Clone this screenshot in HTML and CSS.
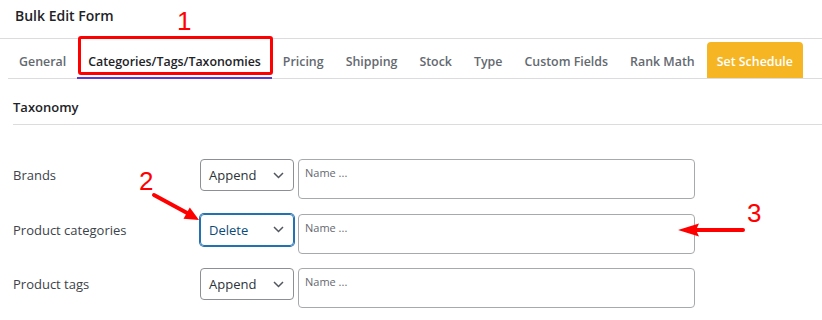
FILE: index.html
```html
<!DOCTYPE html>
<html lang="en">
<head>
  <meta charset="UTF-8">
  <meta name="viewport" content="width=device-width, initial-scale=1.0">
  <title>Bulk Edit Form</title>
  <link rel="stylesheet" href="styles.css">
</head>
<body>
  <div class="page">
    <div class="form-title">Bulk Edit Form</div>

    <div class="tabs">
      <div class="tab">General</div>
      <div class="tab active">Categories/Tags/Taxonomies</div>
      <div class="tab">Pricing</div>
      <div class="tab">Shipping</div>
      <div class="tab">Stock</div>
      <div class="tab">Type</div>
      <div class="tab">Custom Fields</div>
      <div class="tab">Rank Math</div>
      <div class="tab schedule">Set Schedule</div>
    </div>

    <div class="section">
      <h3 class="section-title">Taxonomy</h3>

      <div class="rows">
        <div class="row">
          <label class="row-label">Brands</label>
          <div class="select">
            <span>Append</span>
            <svg class="chevron" width="11" height="7" viewBox="0 0 11 7"><path d="M1 1l4.5 4.5L10 1" fill="none" stroke="#50575e" stroke-width="1.5"/></svg>
          </div>
          <div class="terms">Name ...</div>
        </div>

        <div class="row">
          <label class="row-label">Product categories</label>
          <div class="select focus">
            <span>Delete</span>
            <svg class="chevron" width="11" height="7" viewBox="0 0 11 7"><path d="M1 1l4.5 4.5L10 1" fill="none" stroke="#50575e" stroke-width="1.5"/></svg>
          </div>
          <div class="terms">Name ...</div>
        </div>

        <div class="row">
          <label class="row-label">Product tags</label>
          <div class="select">
            <span>Append</span>
            <svg class="chevron" width="11" height="7" viewBox="0 0 11 7"><path d="M1 1l4.5 4.5L10 1" fill="none" stroke="#50575e" stroke-width="1.5"/></svg>
          </div>
          <div class="terms">Name ...</div>
        </div>
      </div>
    </div>

    <!-- screenshot annotations -->
    <div class="notes">
      <div class="note-box"></div>
      <span class="note-num n1">1</span>
      <span class="note-num n2">2</span>
      <span class="note-num n3">3</span>
      <svg class="note-arrows" width="822" height="320" viewBox="0 0 822 320">
        <line x1="154" y1="195" x2="189" y2="214" stroke="#f00" stroke-width="4" stroke-linecap="round"/>
        <polygon points="199,220 183.5,218.8 189.8,207.4" fill="#f00"/>
        <line x1="743" y1="230" x2="694" y2="230" stroke="#f00" stroke-width="4" stroke-linecap="round"/>
        <polygon points="678,230 699,223.5 696,230 699,236.5" fill="#f00"/>
      </svg>
    </div>
  </div>
</body>
</html>
```

FILE: styles.css
```css
* {
  box-sizing: border-box;
  margin: 0;
  padding: 0;
}

body {
  background: #fff;
  font-family: 'Open Sans', 'Noto Sans', sans-serif;
  color: #1d2327;
}

.page {
  position: relative;
  width: 822px;
  height: 320px;
  overflow: hidden;
}

.form-title {
  height: 39px;
  padding: 0 15px;
  line-height: 32px;
  font-size: 14px;
  font-weight: 600;
  border-bottom: 1px solid #dcdcde;
}

.tabs {
  display: flex;
  align-items: flex-end;
  height: 40px;
  margin-left: 8px;
  border-bottom: 1px solid #dcdcde;
}

.tab {
  position: relative;
  height: 36px;
  padding: 3px 11px 0;
  line-height: 33px;
  font-size: 12.4px;
  font-weight: 600;
  color: #646970;
  white-space: nowrap;
}

.tab.active {
  color: #1d2327;
}

.tab.active::after {
  content: '';
  position: absolute;
  left: 0;
  right: 0;
  bottom: -1px;
  height: 2px;
  background: #5b3bd1;
}

.tab.schedule {
  margin-left: 1px;
  padding: 3px 10px 0;
  background: #f6b623;
  color: #fff;
  border-radius: 4px 4px 0 0;
}

.section {
  padding-left: 13px;
}

.section-title {
  padding: 18px 0 7px;
  line-height: 20px;
  font-size: 13px;
  font-weight: 600;
  color: #1d2327;
  border-bottom: 1px solid #dcdcde;
}

.rows {
  display: flex;
  flex-direction: column;
  gap: 14.5px;
  margin-top: 34px;
}

.row {
  display: flex;
  align-items: flex-start;
}

.row-label {
  width: 187px;
  line-height: 32px;
  font-size: 13px;
  color: #3c434a;
}

.select {
  display: flex;
  align-items: center;
  justify-content: space-between;
  width: 94px;
  height: 32px;
  padding: 0 8px 0 8px;
  border: 1px solid #8c8f94;
  border-radius: 4px;
  font-size: 13px;
  color: #2c3338;
}

.select.focus {
  border-color: #2271b1;
  box-shadow: 0 0 0 1px #2271b1;
  color: #0a4b78;
}

.chevron {
  display: block;
  margin-right: 1px;
}

.terms {
  width: 397px;
  height: 40px;
  margin-left: 4px;
  padding: 5px 6px;
  border: 1px solid #a7aaad;
  border-radius: 4px;
  font-size: 11px;
  line-height: 15px;
  color: #646970;
}

.notes {
  position: absolute;
  top: 0;
  left: 0;
  width: 822px;
  height: 320px;
  pointer-events: none;
}

.note-box {
  position: absolute;
  left: 78px;
  top: 36px;
  width: 195px;
  height: 39px;
  border: 3px solid #f00;
  border-radius: 3px;
}

.note-num {
  position: absolute;
  font-family: 'Liberation Sans', Arial, sans-serif;
  font-size: 26px;
  line-height: 26px;
  color: #f00;
}

.n1 { left: 177px; top: 8px; }
.n2 { left: 139px; top: 168px; }
.n3 { left: 747px; top: 200px; }

.note-arrows {
  position: absolute;
  top: 0;
  left: 0;
}
```
